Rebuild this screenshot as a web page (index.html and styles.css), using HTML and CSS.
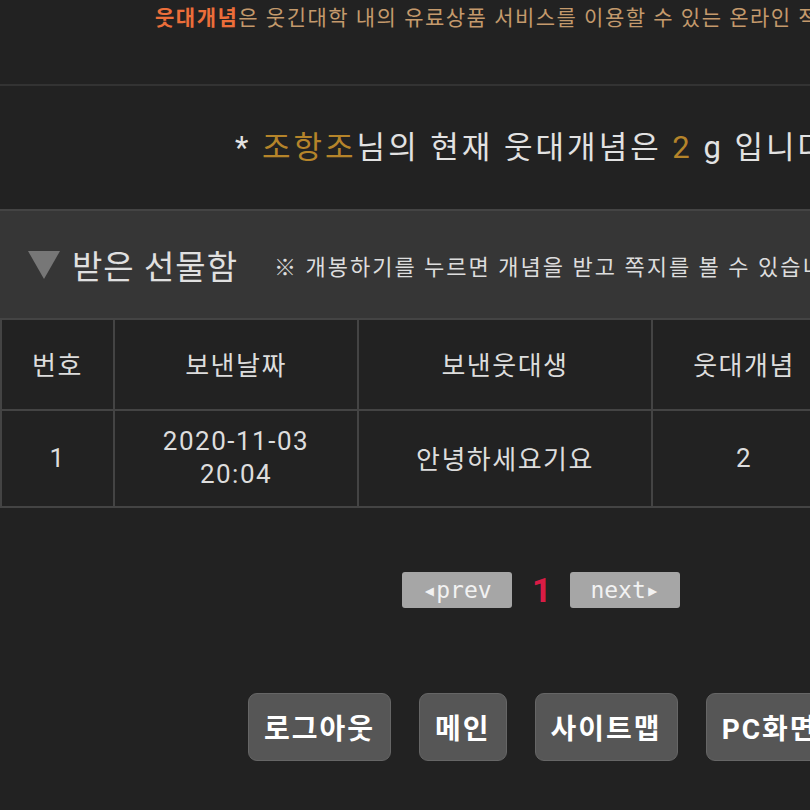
FILE: index.html
```html
<!DOCTYPE html>
<html lang="ko">
<head>
  <meta charset="UTF-8" />
  <title>웃대개념 선물함</title>
  <link rel="stylesheet" href="styles.css">
</head>
<body>
  <div class="page">

    <div class="notice">
      <b class="brand">웃대개념</b>은 웃긴대학 내의 유료상품 서비스를 이용할 수 있는 온라인 적립금입니다.
    </div>

    <div class="status">
      * <span class="gold">조항조</span>님의 현재 웃대개념은 <span class="gold">2</span> g 입니다.
    </div>

    <div class="gift-head">
      <span class="tri"></span>
      <h2>받은 선물함</h2>
      <span class="hint">※ 개봉하기를 누르면 개념을 받고 쪽지를 볼 수 있습니다.</span>
    </div>

    <table class="gift-table">
      <colgroup>
        <col class="c-no">
        <col class="c-date">
        <col class="c-from">
        <col class="c-point">
        <col class="c-open">
      </colgroup>
      <tr>
        <th>번호</th>
        <th>보낸날짜</th>
        <th>보낸웃대생</th>
        <th>웃대개념</th>
        <th>개봉하기</th>
      </tr>
      <tr>
        <td>1</td>
        <td class="date">2020-11-03<br>20:04</td>
        <td>안녕하세요기요</td>
        <td>2</td>
        <td>개봉</td>
      </tr>
    </table>

    <div class="pager">
      <a class="pg-btn" href="#">&#9666;prev</a>
      <span class="pg-cur">1</span>
      <a class="pg-btn" href="#">next&#9656;</a>
    </div>

    <div class="bottom-menu">
      <a class="menu-btn" href="#">로그아웃</a>
      <a class="menu-btn" href="#">메인</a>
      <a class="menu-btn" href="#">사이트맵</a>
      <a class="menu-btn" href="#">PC화면</a>
    </div>

  </div>
</body>
</html>
```

FILE: styles.css
```css
body {
  margin: 0;
  background-color: #222222;
  color: #dddddd;
  font-family: Roboto, "Noto Sans CJK KR", sans-serif;
  overflow: hidden;
}

.page {
  width: 1400px;
  white-space: nowrap;
}

.notice {
  height: 86px;
  box-sizing: border-box;
  padding: 4px 0 0 155px;
  font-size: 21px;
  line-height: 28px;
  letter-spacing: 1.5px;
  color: #c49a6c;
  border-bottom: 2px solid #333333;
}

.brand {
  color: #ec6e3a;
}

.status {
  height: 123px;
  line-height: 123px;
  padding-left: 235px;
  font-size: 31px;
  letter-spacing: 3px;
  color: #e2e2e2;
}

.gold {
  color: #b5842a;
}

.gift-head {
  height: 107px;
  display: flex;
  align-items: center;
  padding-left: 28px;
  background-color: #363636;
  border-top: 2px solid #444444;
}

.tri {
  width: 0;
  height: 0;
  border-left: 16px solid transparent;
  border-right: 16px solid transparent;
  border-top: 28px solid #777777;
  margin-right: 12px;
}

.gift-head h2 {
  margin: 0 36px 0 0;
  font-size: 33px;
  font-weight: normal;
  letter-spacing: 1px;
  color: #e0e0e0;
}

.hint {
  font-size: 22px;
  letter-spacing: 2px;
  color: #dddddd;
}

.gift-table {
  border-collapse: collapse;
  border: 2px solid #444444;
  font-size: 26px;
  letter-spacing: 1.5px;
  color: #dddddd;
}

.gift-table th,
.gift-table td {
  border: 2px solid #444444;
  text-align: center;
  font-weight: normal;
  padding: 0;
}

.gift-table th {
  height: 86px;
  padding-bottom: 3px;
}

.gift-table td {
  height: 93px;
  padding-bottom: 2px;
}

.gift-table td.date {
  line-height: 33px;
}

.c-no { width: 113px; }
.c-date { width: 244px; }
.c-from { width: 294px; }
.c-point { width: 184px; }
.c-open { width: 200px; }

.pager {
  display: flex;
  align-items: center;
  margin-top: 62px;
  padding-left: 402px;
  gap: 20px;
}

.pg-btn {
  width: 110px;
  height: 36px;
  box-sizing: border-box;
  display: flex;
  align-items: center;
  justify-content: center;
  background-color: #a6a6a6;
  border-radius: 3px;
  color: #f2f2f2;
  font-family: "DejaVu Sans Mono", monospace;
  font-size: 23px;
  text-decoration: none;
}

.pg-cur {
  color: #d91c45;
  font-size: 34px;
  font-weight: bold;
  width: 18px;
  text-align: center;
}

.bottom-menu {
  display: flex;
  gap: 28px;
  margin-top: 83px;
  padding-left: 248px;
}

.menu-btn {
  height: 68px;
  box-sizing: border-box;
  display: flex;
  align-items: center;
  padding: 0 15px;
  background-color: #565656;
  border: 1px solid #666666;
  border-radius: 9px;
  color: #ffffff;
  font-size: 28px;
  font-weight: bold;
  letter-spacing: 2px;
  text-decoration: none;
}
```
